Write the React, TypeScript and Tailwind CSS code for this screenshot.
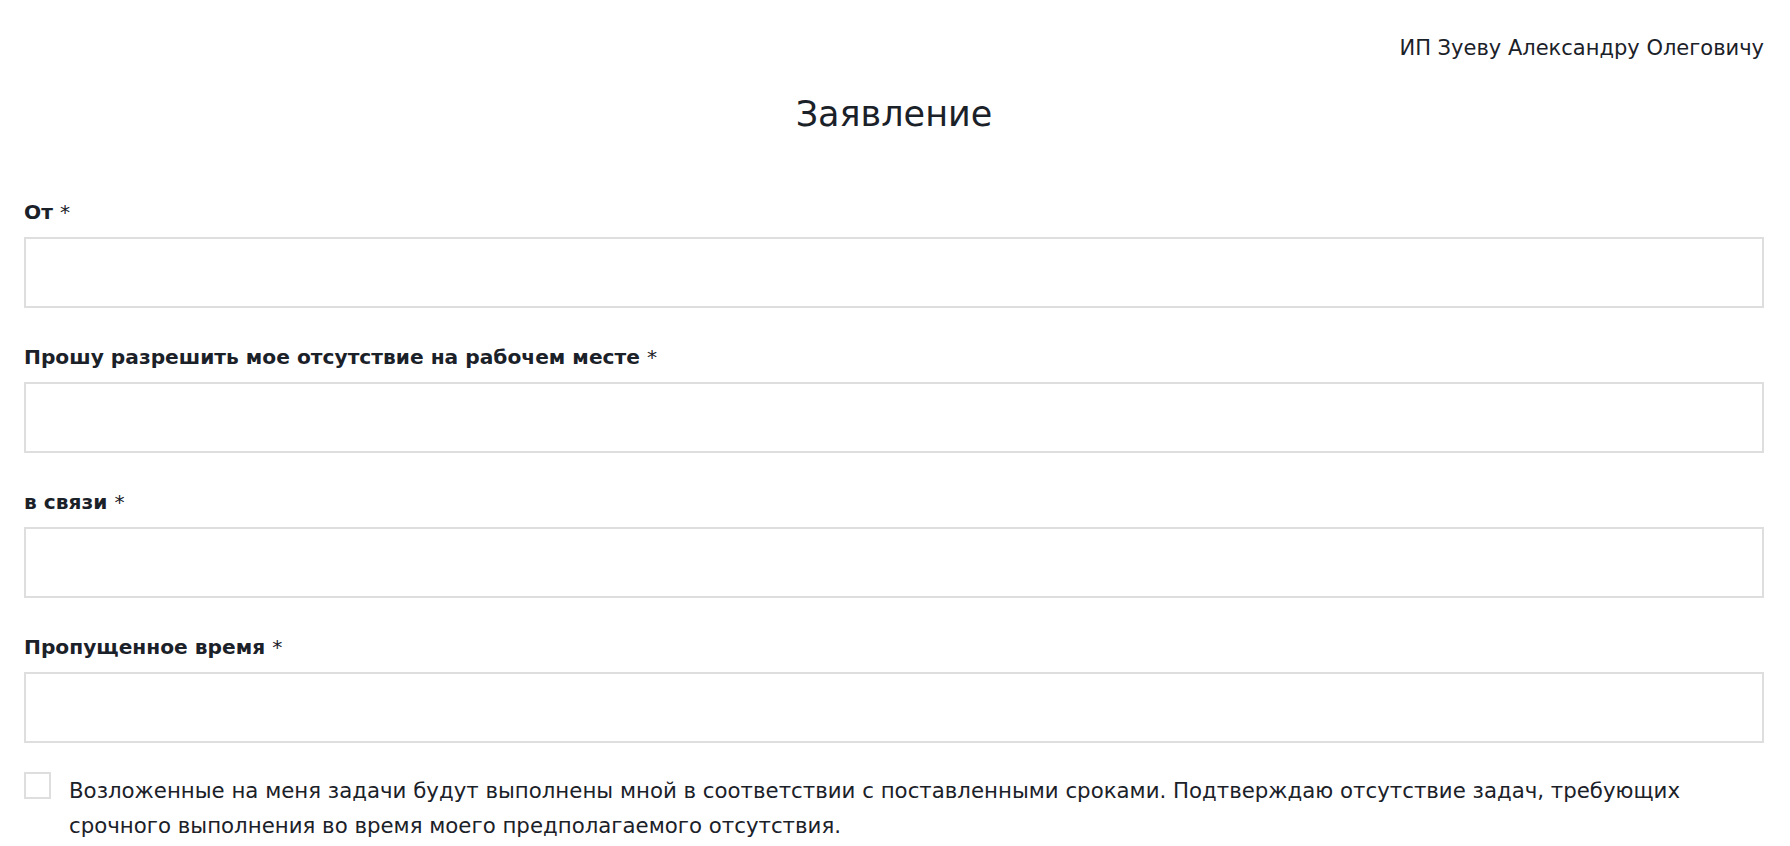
import React from "react";

const fields = [
  "От",
  "Прошу разрешить мое отсутствие на рабочем месте",
  "в связи",
  "Пропущенное время",
];

export default function App() {
  return (
    <div
      className="min-h-screen bg-white pl-6 pr-[26px] pt-[34px] text-[#1b2128]"
      style={{ fontFamily: '"DejaVu Sans", "Open Sans", sans-serif' }}
    >
      <div className="text-right text-[21px] leading-[28px]">ИП Зуеву Александру Олеговичу</div>
      <h1 className="mt-[30px] text-center text-[35px] leading-[44px] font-normal">Заявление</h1>
      <div className="mt-[62px] flex flex-col gap-[35px]">
        {fields.map((f) => (
          <div key={f} className="flex flex-col gap-[11px]">
            <label className="text-[20.2px] leading-[28px] font-bold">
              {f} <span className="font-normal">*</span>
            </label>
            <input className="h-[71px] w-full border-2 border-[#dedede] bg-white outline-none" />
          </div>
        ))}
      </div>
      <div className="mt-[29px] flex items-start gap-[18px]">
        <div className="h-[27px] w-[27px] shrink-0 border-2 border-[#dedede] bg-white" />
        <p className="mt-[1px] text-[21.3px] leading-[35px]">
          Возложенные на меня задачи будут выполнены мной в соответствии с поставленными сроками. Подтверждаю отсутствие задач, требующих срочного выполнения во время моего предполагаемого отсутствия.
        </p>
      </div>
    </div>
  );
}
